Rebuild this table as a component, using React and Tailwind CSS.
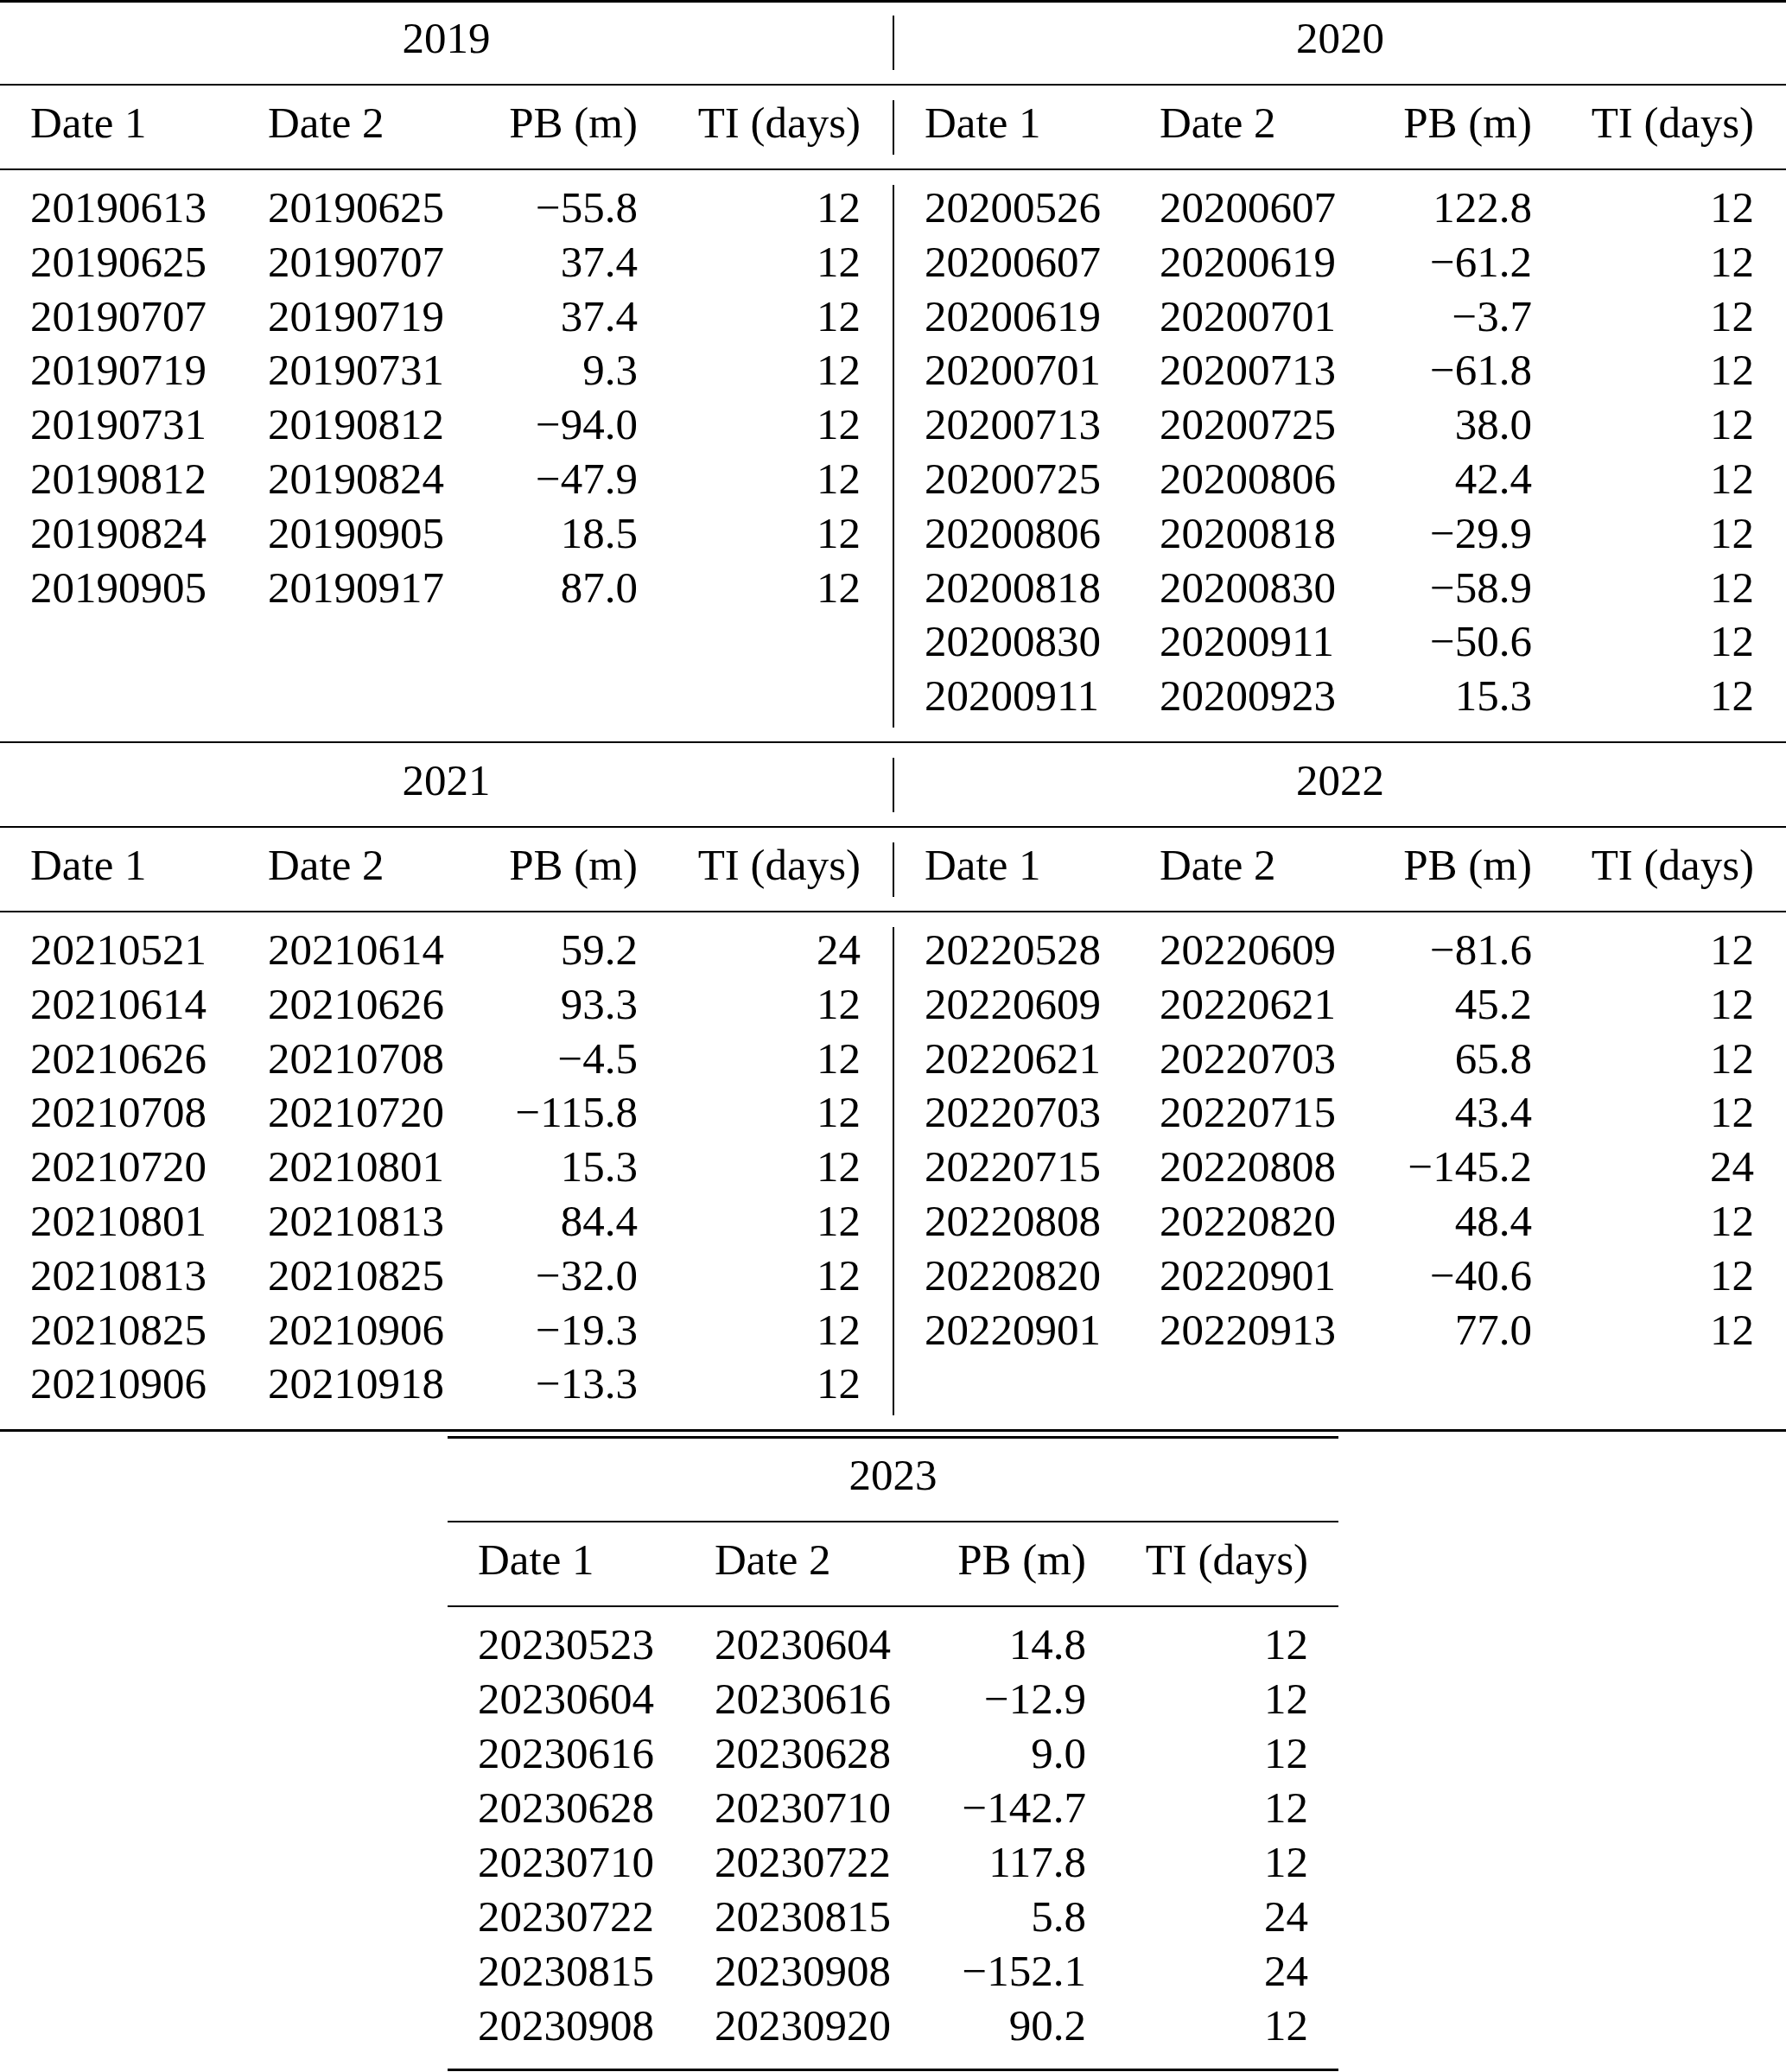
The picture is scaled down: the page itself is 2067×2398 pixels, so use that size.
import React from "react";

const data2019 = [
  ["20190613", "20190625", "−55.8", "12"],
  ["20190625", "20190707", "37.4", "12"],
  ["20190707", "20190719", "37.4", "12"],
  ["20190719", "20190731", "9.3", "12"],
  ["20190731", "20190812", "−94.0", "12"],
  ["20190812", "20190824", "−47.9", "12"],
  ["20190824", "20190905", "18.5", "12"],
  ["20190905", "20190917", "87.0", "12"],
];

const data2020 = [
  ["20200526", "20200607", "122.8", "12"],
  ["20200607", "20200619", "−61.2", "12"],
  ["20200619", "20200701", "−3.7", "12"],
  ["20200701", "20200713", "−61.8", "12"],
  ["20200713", "20200725", "38.0", "12"],
  ["20200725", "20200806", "42.4", "12"],
  ["20200806", "20200818", "−29.9", "12"],
  ["20200818", "20200830", "−58.9", "12"],
  ["20200830", "20200911", "−50.6", "12"],
  ["20200911", "20200923", "15.3", "12"],
];

const data2021 = [
  ["20210521", "20210614", "59.2", "24"],
  ["20210614", "20210626", "93.3", "12"],
  ["20210626", "20210708", "−4.5", "12"],
  ["20210708", "20210720", "−115.8", "12"],
  ["20210720", "20210801", "15.3", "12"],
  ["20210801", "20210813", "84.4", "12"],
  ["20210813", "20210825", "−32.0", "12"],
  ["20210825", "20210906", "−19.3", "12"],
  ["20210906", "20210918", "−13.3", "12"],
];

const data2022 = [
  ["20220528", "20220609", "−81.6", "12"],
  ["20220609", "20220621", "45.2", "12"],
  ["20220621", "20220703", "65.8", "12"],
  ["20220703", "20220715", "43.4", "12"],
  ["20220715", "20220808", "−145.2", "24"],
  ["20220808", "20220820", "48.4", "12"],
  ["20220820", "20220901", "−40.6", "12"],
  ["20220901", "20220913", "77.0", "12"],
];

const data2023 = [
  ["20230523", "20230604", "14.8", "12"],
  ["20230604", "20230616", "−12.9", "12"],
  ["20230616", "20230628", "9.0", "12"],
  ["20230628", "20230710", "−142.7", "12"],
  ["20230710", "20230722", "117.8", "12"],
  ["20230722", "20230815", "5.8", "24"],
  ["20230815", "20230908", "−152.1", "24"],
  ["20230908", "20230920", "90.2", "12"],
];

const HEAD = ["Date 1", "Date 2", "PB (m)", "TI (days)"];

// one line of the table, columns given by the grid class
const Line = ({ cells, grid, h = "h-[62.8px]" }) => (
  <div className={`grid ${grid} ${h} leading-[53px] whitespace-nowrap`}>
    <div>{cells[0]}</div>
    <div>{cells[1]}</div>
    <div className="text-right">{cells[2]}</div>
    <div className="text-right">{cells[3]}</div>
  </div>
);

const LEFT = "grid-cols-[275px_240px_188px_258px]";
const RIGHT = "grid-cols-[272px_240px_191px_257px]";
const SINGLE = "grid-cols-[274px_240px_190px_257px]";

const Rule = () => <div className="mt-[16.5px] mb-[16.7px] h-[2px] bg-black" />;

// two side-by-side years, split by a vertical bar
const YearPair = ({ a, b, rowsA, rowsB }) => (
  <div>
    <div className="flex">
      <div className="w-[1035px] border-r-2 border-black h-[62.8px] leading-[53px] text-center">{a}</div>
      <div className="flex-1 h-[62.8px] leading-[53px] text-center">{b}</div>
    </div>
    <Rule />
    <div className="flex">
      <div className="w-[1035px] border-r-2 border-black pl-[35px] pr-[37px]">
        <Line cells={HEAD} grid={LEFT} />
      </div>
      <div className="flex-1 pl-[35px] pr-[37px]">
        <Line cells={HEAD} grid={RIGHT} />
      </div>
    </div>
    <Rule />
    <div className="flex">
      <div className="w-[1035px] border-r-2 border-black pl-[35px] pr-[37px]">
        {rowsA.map((r) => (
          <Line key={r[0]} cells={r} grid={LEFT} />
        ))}
      </div>
      <div className="flex-1 pl-[35px] pr-[37px]">
        {rowsB.map((r) => (
          <Line key={r[0]} cells={r} grid={RIGHT} />
        ))}
      </div>
    </div>
  </div>
);

export default function App() {
  return (
    <div className="w-[2067px] h-[2398px] bg-white text-black text-[51px] font-['Liberation_Serif','Times_New_Roman',serif] overflow-hidden">
      <div className="h-[3px] bg-black" />
      <div className="pt-[15px]">
        <YearPair a="2019" b="2020" rowsA={data2019} rowsB={data2020} />
        <Rule />
        <YearPair a="2021" b="2022" rowsA={data2021} rowsB={data2022} />
      </div>
      <div className="mt-[16px] h-[2.5px] bg-black" />

      {/* 2023 on its own, centred */}
      <div className="mx-auto mt-[5px] w-[1031px]">
        <div className="h-[3px] bg-black" />
        <div className="mt-[16px] h-[62.8px] leading-[53px] text-center">2023</div>
        <div className="mt-[16.2px] mb-[17.6px] h-[2px] bg-black" />
        <div className="px-[35px]">
          <Line cells={HEAD} grid={SINGLE} />
        </div>
        <div className="mt-[16px] mb-[16.6px] h-[2px] bg-black" />
        <div className="px-[35px]">
          {data2023.map((r) => (
            <Line key={r[0]} cells={r} grid={SINGLE} h="h-[63px]" />
          ))}
        </div>
        <div className="mt-[13px] h-[3px] bg-black" />
      </div>
    </div>
  );
}
